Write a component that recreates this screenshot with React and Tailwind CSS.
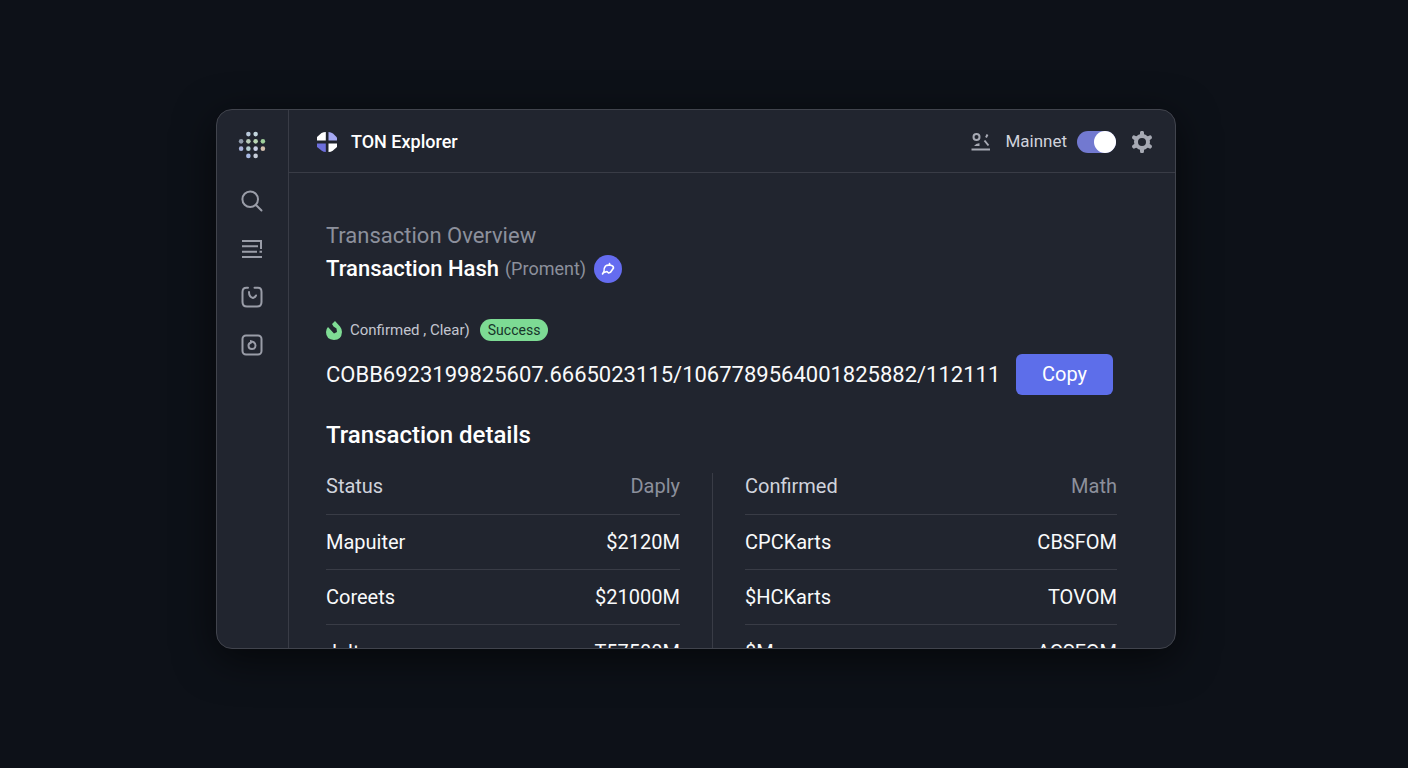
import React, { useState } from 'react';

const HASH = 'COBB6923199825607.6665023115/1067789564001825882/112111';

const leftTable = {
    head: ['Status', 'Daply'],
    rows: [['Mapuiter', '$2120M'], ['Coreets', '$21000M'], ['Jultor', 'T57500M']]
};

const rightTable = {
    head: ['Confirmed', 'Math'],
    rows: [['CPCKarts', 'CBSFOM'], ['$HCKarts', 'TOVOM'], ['$Marns', 'ACSFOM']]
};

// Dotted mark at the top of the sidebar
const dots = [
    [10, 3, '#b9c9dc'], [17, 3, '#c3d6de'],
    [3, 10, '#8f9bab'], [10, 10, '#b7cbb9'], [17, 10, '#b9d6b4'], [24, 10, '#9fcf9b'],
    [3, 17, '#a9b4dc'], [10, 17, '#b4cfd2'], [17, 17, '#c9cfe6'], [24, 17, '#d3bfae'],
    [10, 24, '#a9bbe6'], [17, 24, '#c6cdd8']
];

const DotsLogo = () => (
    <svg viewBox="0 0 27 27" className="h-7 w-7" aria-hidden="true">
        {dots.map(([cx, cy, fill]) => (
            <circle key={`${cx}-${cy}`} cx={cx} cy={cy} r="2.200" fill={fill} />
        ))}
    </svg>
);

const BrandLogo = () => (
    <svg viewBox="0 0 20 20" className="h-5 w-5" aria-hidden="true">
        <path d="M8.800 0V8.500H0V5L4.500 1Q6.500 0 8.800 0Z" fill="#fff" />
        <path d="M11.500 0Q14 0 16 1.500L20 5.500V8.500H11.500Z" fill="#a5a9f3" />
        <path d="M0 11.500H8.800V20Q6.500 20 4.500 18.500L0 15Z" fill="#6d6fdc" />
        <path d="M11.500 11.500H20V15L16 18.500Q14 20 11.500 20Z" fill="#fff" />
    </svg>
);

const SearchIcon = () => (
    <svg viewBox="0 0 22 22" className="h-[22px] w-[22px]" fill="none" stroke="currentColor" strokeWidth="2" strokeLinecap="round" aria-hidden="true">
        <circle cx="9.200" cy="9.200" r="7.800" />
        <path d="M15 15L20.500 20.500" />
    </svg>
);

const ListIcon = () => (
    <svg viewBox="0 0 22 20" className="h-5 w-[22px]" fill="none" stroke="currentColor" strokeWidth="2" aria-hidden="true">
        <path d="M1 2H20V10M1 7.300H17M1 12.700H16M18.500 12.700H21M1 18H21" />
    </svg>
);

const ClockIcon = () => (
    <svg viewBox="0 0 22 22" className="h-[22px] w-[22px]" fill="none" stroke="currentColor" strokeWidth="2" strokeLinecap="round" aria-hidden="true">
        <path d="M7 1.800H5.500Q1.500 1.800 1.500 6V16Q1.500 20.500 6 20.500H16Q20.500 20.500 20.500 16V6Q20.500 1.800 17 1.800H13.500" />
        <path d="M8 6Q8 11 12 12Q14 11.500 15 9.500" />
    </svg>
);

const BoxIcon = () => (
    <svg viewBox="0 0 22 22" className="h-[22px] w-[22px]" fill="none" stroke="currentColor" strokeWidth="2" aria-hidden="true">
        <rect x="1.500" y="1.500" width="19" height="19" rx="3.500" />
        <path d="M10 7.200Q14.500 8 14.500 11.500Q14.500 15 11 15Q7.500 15 7.500 11.500Q7.500 9.500 10 8.500Z" />
    </svg>
);

const AccountIcon = () => (
    <svg viewBox="0 0 20 18" className="h-[18px] w-5" fill="none" stroke="currentColor" strokeWidth="2" aria-hidden="true">
        <circle cx="5.500" cy="4" r="3" />
        <path d="M3 13Q5 10 8.500 10.200V13Z" fill="currentColor" stroke="none" />
        <path d="M16.500 1.500L15 4.500M13.500 7.500L17.500 12.500M0.500 16.500H19" />
    </svg>
);

const GearIcon = () => (
    <svg viewBox="0 0 22 22" className="h-[22px] w-[22px]" fill="none" stroke="currentColor" aria-hidden="true">
        <circle cx="11" cy="11" r="6" strokeWidth="4" />
        {[0, 60, 120].map(angle => (
            <path key={angle} d="M11 1.800V4M11 18V20.200" strokeWidth="4" strokeLinecap="round" transform={`rotate(${angle} 11 11)`} />
        ))}
    </svg>
);

const SwapIcon = () => (
    <svg viewBox="0 0 14 14" className="h-3.5 w-3.5" fill="none" stroke="currentColor" strokeWidth="1.600" strokeLinecap="round" strokeLinejoin="round" aria-hidden="true">
        <path d="M1.500 12L3 9.500Q2.500 6.500 4.500 4Q6 2.800 9 3.200L8.500 1.500" />
        <path d="M9 3.200Q12.500 3.200 12.500 6L9.500 10.200L7.500 11L6 9.500L3 10.500" />
    </svg>
);

const FlameIcon = () => (
    <svg viewBox="0 0 16 19" className="h-[19px] w-4" aria-hidden="true">
        <path d="M9 0L14 5.500Q16 8 16 11Q15.500 19 8 19Q0 18.500 0 11Q0 8 2 6L8 12.500L11 11L10.500 7.500L7.500 5.500L6 3Z" fill="#7fdc95" />
    </svg>
);

const navItems = [
    { label: 'Search', icon: <SearchIcon /> },
    { label: 'Transactions', icon: <ListIcon /> },
    { label: 'History', icon: <ClockIcon /> },
    { label: 'Blocks', icon: <BoxIcon /> }
];

const DetailsTable = ({ head, rows }) => (
    <table className="w-full text-xl text-gray-50">
        <thead>
            <tr className="h-14 border-b border-[#393c46]">
                <th scope="col" className="text-left font-normal text-[#d0d3dc]">{head[0]}</th>
                <th scope="col" className="text-right font-normal text-[#8c909c]">{head[1]}</th>
            </tr>
        </thead>
        <tbody>
            {rows.map(([name, value]) => (
                <tr key={name} className="h-[55px] border-b border-[#393c46]">
                    <td className="text-left">{name}</td>
                    <td className="text-right">{value}</td>
                </tr>
            ))}
        </tbody>
    </table>
);

const App = () => {
    const [mainnet, setMainnet] = useState(true);

    return (
        <div className="flex min-h-screen items-center justify-center bg-[#0d1118] pr-4 pb-2.5 font-[Roboto,sans-serif]">
            <div className="flex max-h-[540px] w-full max-w-[960px] overflow-hidden rounded-2xl border border-[#41444d] bg-[#21252f] shadow-[0_10px_40px_rgba(0,0,0,0.6)]">
                {/* Sidebar */}
                <nav className="flex w-[72px] shrink-0 flex-col items-center border-r border-[#393c46] pt-[21px] pr-0.5 text-[#9a9da8]">
                    <DotsLogo />
                    <div className="mt-[18px] flex flex-col">
                        {navItems.map(item => (
                            <button key={item.label} type="button" aria-label={item.label} className="flex h-12 w-12 items-center justify-center">
                                {item.icon}
                            </button>
                        ))}
                    </div>
                </nav>

                <div className="min-w-0 flex-1">
                    {/* Header */}
                    <header className="flex h-[63px] items-center justify-between border-b border-[#393c46] pt-px pr-[22px] pl-7">
                        <div className="flex items-center gap-3.5">
                            <BrandLogo />
                            <span className="text-lg font-medium text-white">TON Explorer</span>
                        </div>
                        <div className="flex items-center text-[#a6a9b3]">
                            <AccountIcon />
                            <label htmlFor="mainnet" className="mr-2.5 ml-3.5 text-[17px] text-[#d0d3dc]">Mainnet</label>
                            <input
                                id="mainnet"
                                type="checkbox"
                                role="switch"
                                checked={mainnet}
                                onChange={e => setMainnet(e.target.checked)}
                                className="flex h-[22px] w-[39px] appearance-none rounded-full bg-gray-600 before:h-[22px] before:w-[22px] before:rounded-full before:bg-white checked:justify-end checked:bg-[#7279d0]"
                            />
                            <button type="button" aria-label="Settings" className="ml-[15px]">
                                <GearIcon />
                            </button>
                        </div>
                    </header>

                    {/* Transaction */}
                    <main className="pt-12 pr-[58px] pl-[37px]">
                        <h1 className="text-[22px] leading-[30px] text-[#8c909c]">Transaction Overview</h1>
                        <div className="mt-[3px] flex items-center">
                            <h2 className="text-[22px] leading-[30px] font-medium text-white">Transaction Hash</h2>
                            <span className="ml-1.5 text-lg text-[#8c909c]">(Proment)</span>
                            <button type="button" aria-label="Swap" className="ml-2 flex h-7 w-7 items-center justify-center rounded-full bg-[#656cf0] text-white">
                                <SwapIcon />
                            </button>
                        </div>

                        <div className="mt-[35px] flex items-center">
                            <FlameIcon />
                            <span className="ml-2 text-[15px] text-[#c3c6cf]">Confirmed , Clear)</span>
                            <span className="ml-2.5 rounded-full bg-[#7ddb94] px-2 py-px text-sm text-[#17352a]">Success</span>
                        </div>

                        <div className="mt-3 flex items-center justify-between pr-1">
                            <p className="text-[22px] text-gray-50">{HASH}</p>
                            <button type="button" className="h-[41px] w-[97px] rounded-md bg-[#5d6eea] text-xl text-white">Copy</button>
                        </div>

                        <h2 className="mt-6 text-2xl font-medium text-white">Transaction details</h2>
                        <div className="mt-2 grid grid-cols-[354fr_1px_372fr] gap-x-8">
                            <DetailsTable {...leftTable} />
                            <div className="mt-3.5 bg-[#393c46]" />
                            <DetailsTable {...rightTable} />
                        </div>
                    </main>
                </div>
            </div>
        </div>
    );
};

export default App;
